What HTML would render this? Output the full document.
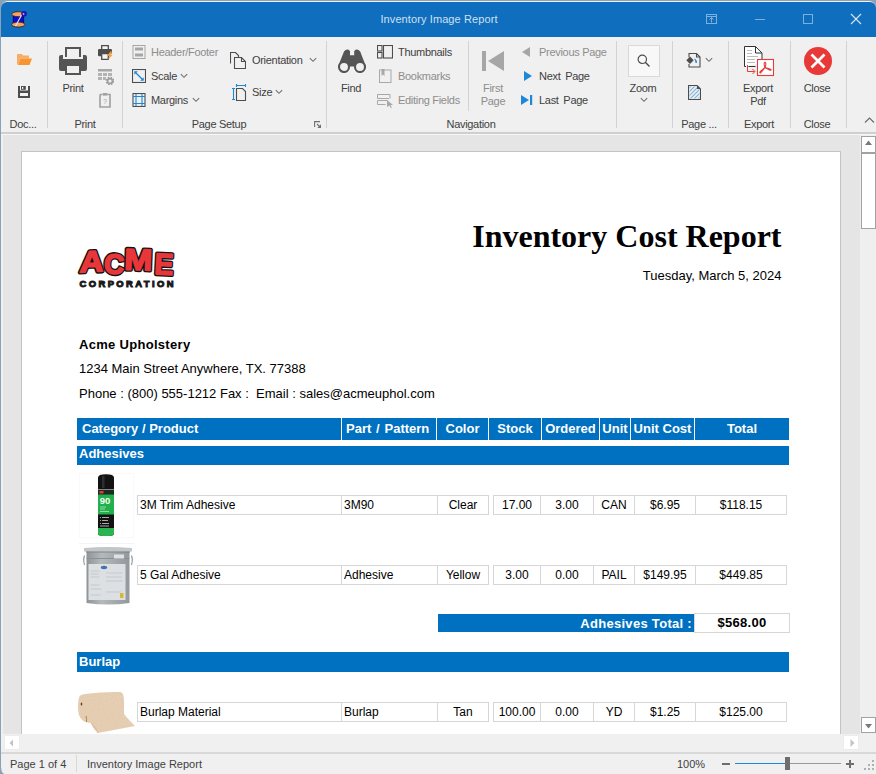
<!DOCTYPE html>
<html><head><meta charset="utf-8">
<style>
*{margin:0;padding:0;box-sizing:border-box}
html,body{width:876px;height:774px;overflow:hidden;background:#8aa2b7;font-family:"Liberation Sans",sans-serif}
.a{position:absolute}
#win{position:absolute;left:1px;top:1px;width:875px;height:773px;background:#f0f0f0;border-radius:7px 7px 0 6px;overflow:hidden}
#title{position:absolute;left:1px;top:2px;width:875px;height:35px;background:#106ebe;border-radius:6px 6px 0 0}
.ttl{position:absolute;left:0;width:878px;top:13px;text-align:center;color:#cfe0f0;font-size:11px;letter-spacing:0.1px}
.sep{position:absolute;width:1px;background:#d2d2d2}
.t{position:absolute;font-size:11px;letter-spacing:-0.3px;color:#404040;white-space:nowrap;line-height:14px}
.dis{color:#8f8f8f}
.gl{position:absolute;font-size:11px;letter-spacing:-0.3px;color:#404040;white-space:nowrap;line-height:14px;top:117px}
#prev{position:absolute;left:3px;top:135px;width:873px;height:599px;background:#e5e5e5}
#page{position:absolute;left:21px;top:151px;width:820px;height:600px;background:#fff;border:1px solid #c3c3c3}
.r{position:absolute;white-space:nowrap;color:#000}
.bar{position:absolute;background:#0070c0}
.cell{position:absolute;border:1px solid #d6d6d6;font-size:12px;line-height:19px;white-space:nowrap;overflow:hidden}
.hd{position:absolute;color:#fff;font-weight:bold;font-size:13px;line-height:22px;top:418px;height:22px;text-align:center}
.vl{position:absolute;width:1px;background:#fff;top:418px;height:22px}
</style></head><body>
<div id="win"></div>
<div id="title" class="a"></div>
<div class="ttl">Inventory Image Report</div>
<!-- ribbon separators -->
<div class="sep" style="left:47px;top:41px;height:87px"></div>
<div class="sep" style="left:122px;top:41px;height:87px"></div>
<div class="sep" style="left:326px;top:41px;height:87px"></div>
<div class="sep" style="left:468px;top:41px;height:70px"></div>
<div class="sep" style="left:616px;top:41px;height:87px"></div>
<div class="sep" style="left:672px;top:41px;height:87px"></div>
<div class="sep" style="left:728px;top:41px;height:87px"></div>
<div class="sep" style="left:790px;top:41px;height:87px"></div>
<div class="sep" style="left:846px;top:41px;height:87px"></div>
<div class="a" style="left:1px;top:132px;width:875px;height:2px;background:#cfcfcf"></div>
<!-- title bar icons -->
<svg class="a" style="left:11px;top:11px" width="16" height="17" viewBox="0 0 16 17">
  <rect x="2.2" y="3" width="10.5" height="10.5" fill="#0a0ad8" stroke="#000040" stroke-width="0.8"/>
  <ellipse cx="7.3" cy="3.2" rx="6.6" ry="2.5" fill="#f0a268" stroke="#3a1a08" stroke-width="0.8"/>
  <ellipse cx="7.3" cy="13.6" rx="6.6" ry="2.5" fill="#f0a268" stroke="#3a1a08" stroke-width="0.8"/>
  <path d="M12 1.5 L4.5 15" stroke="#e8e8f0" stroke-width="1.1"/>
  <circle cx="13" cy="2.8" r="2.1" fill="none" stroke="#0a0ad8" stroke-width="1.4"/>
</svg>
<svg class="a" style="left:705px;top:13px" width="13" height="12" viewBox="0 0 13 12"><g fill="none" stroke="#7fb0dc" stroke-width="1"><rect x="1.5" y="1.5" width="10" height="9"/><path d="M1.5 3.5h10M6.5 9.5v-5M4.5 6.5l2-2 2 2"/></g></svg>
<div class="a" style="left:755px;top:19px;width:10px;height:1px;background:#7fb0dc"></div>
<div class="a" style="left:803px;top:14px;width:10px;height:10px;border:1px solid #7fb0dc"></div>
<svg class="a" style="left:850px;top:13px" width="12" height="12" viewBox="0 0 12 12"><path d="M1 1L11 11M11 1L1 11" stroke="#d8e6f4" stroke-width="1.1"/></svg>

<!-- ribbon texts -->
<div class="t" style="left:151px;top:45px;color:#8d8d8d">Header/Footer</div>
<div class="t" style="left:151px;top:69px">Scale</div>
<div class="t" style="left:151px;top:93px">Margins</div>
<div class="t" style="left:252px;top:53px">Orientation</div>
<div class="t" style="left:252px;top:85px">Size</div>
<div class="t" style="left:398px;top:45px">Thumbnails</div>
<div class="t" style="left:398px;top:69px;color:#8d8d8d">Bookmarks</div>
<div class="t" style="left:398px;top:93px;color:#8d8d8d">Editing Fields</div>
<div class="t" style="left:539px;top:45px;color:#8d8d8d">Previous Page</div>
<div class="t" style="left:539px;top:69px;word-spacing:2px">Next Page</div>
<div class="t" style="left:539px;top:93px;word-spacing:2px">Last Page</div>
<!-- large labels (centered) -->
<div class="t" style="left:43px;width:60px;text-align:center;top:81px">Print</div>
<div class="t" style="left:321px;width:60px;text-align:center;top:81px">Find</div>
<div class="t" style="left:463px;width:60px;text-align:center;top:81px;color:#8d8d8d">First</div>
<div class="t" style="left:463px;width:60px;text-align:center;top:94px;color:#8d8d8d">Page</div>
<div class="t" style="left:613px;width:60px;text-align:center;top:81px">Zoom</div>
<div class="t" style="left:728px;width:60px;text-align:center;top:81px">Export</div>
<div class="t" style="left:728px;width:60px;text-align:center;top:94px">Pdf</div>
<div class="t" style="left:787px;width:60px;text-align:center;top:81px">Close</div>
<!-- group labels -->
<div class="gl" style="left:-7px;width:60px;text-align:center">Doc...</div>
<div class="gl" style="left:55px;width:60px;text-align:center">Print</div>
<div class="gl" style="left:169px;width:100px;text-align:center">Page Setup</div>
<div class="gl" style="left:421px;width:100px;text-align:center">Navigation</div>
<div class="gl" style="left:669px;width:60px;text-align:center">Page ...</div>
<div class="gl" style="left:729px;width:60px;text-align:center">Export</div>
<div class="gl" style="left:787px;width:60px;text-align:center">Close</div>

<!-- Doc group -->
<svg class="a" style="left:16px;top:53px" width="17" height="13" viewBox="0 0 17 13">
  <path d="M1 1h5l1 1.5h6v3H4.5L2 11.5H1z" fill="#f6ad68"/>
  <path d="M4.5 5.5H16L13.5 12H2z" fill="#f7952f"/>
</svg>
<svg class="a" style="left:18px;top:86px" width="12" height="12" viewBox="0 0 12 12">
  <rect x="0" y="0" width="12" height="12" fill="#4d4d4d"/>
  <rect x="2" y="0" width="8" height="4.5" fill="#f4f4f4"/>
  <rect x="3" y="0" width="4.8" height="3.8" fill="#4d4d4d"/>
  <rect x="4" y="0.9" width="1.3" height="2" fill="#f4f4f4"/>
  <rect x="2" y="7" width="8" height="3" fill="#f4f4f4"/>
</svg>
<!-- Print big -->
<svg class="a" style="left:59px;top:47px" width="28" height="28" viewBox="0 0 28 28">
  <path d="M6 0h16v10h-2V2H8v8H6z" fill="#555"/>
  <path d="M2 8h2v4h20V8h2a2 2 0 0 1 2 2v12a2 2 0 0 1-2 2h-4v-7H6v7H2a2 2 0 0 1-2-2V10a2 2 0 0 1 2-2z" fill="#555"/>
  <path d="M6 17h16v11H6z M8 19v7h12v-7z" fill="#555" fill-rule="evenodd"/>
</svg>
<!-- small printer w/ lightning -->
<svg class="a" style="left:98px;top:45px" width="16" height="16" viewBox="0 0 16 16">
  <path d="M3.7 4.5V0.7h6.6v3.8" fill="#f4f4f4" stroke="#4d4d4d" stroke-width="1.3"/>
  <path d="M1.2 4h11.6a1.2 1.2 0 0 1 1.2 1.2V8.5H3.2v2.8H1.2A1.2 1.2 0 0 1 0 10.1V5.2A1.2 1.2 0 0 1 1.2 4z" fill="#4d4d4d"/>
  <path d="M3.7 8.7h6.6v5.6H3.7z" fill="#f4f4f4" stroke="#4d4d4d" stroke-width="1.3"/>
  <path d="M12.3 6.5L9 11h2.6L9.6 15.2l5-5.4h-2.6L14.5 6.5z" fill="#f7952f"/>
</svg>
<!-- grid gear disabled -->
<svg class="a" style="left:98px;top:69px" width="16" height="16" viewBox="0 0 16 16">
  <rect x="0" y="0" width="14" height="2.5" fill="#a8a8a8"/>
  <rect x="0" y="4" width="4" height="3" fill="#b4b4b4"/><rect x="5" y="4" width="4" height="3" fill="#b4b4b4"/><rect x="10" y="4" width="4" height="3" fill="#b4b4b4"/>
  <rect x="0" y="8" width="4" height="3" fill="#b4b4b4"/><rect x="5" y="8" width="3" height="3" fill="#b4b4b4"/>
  <circle cx="12" cy="12" r="3.2" fill="none" stroke="#a0a0a0" stroke-width="2.2" stroke-dasharray="1.6 0.9"/>
  <circle cx="12" cy="12" r="2.4" fill="none" stroke="#a0a0a0" stroke-width="1.6"/>
</svg>
<!-- clipboard disabled -->
<svg class="a" style="left:99px;top:93px" width="13" height="15" viewBox="0 0 13 15">
  <path d="M1 1.5h2.5M8.5 1.5H11v12.5H1V1.5" fill="none" stroke="#a0a0a0" stroke-width="1.6"/>
  <rect x="3.8" y="0" width="4.6" height="2.6" fill="#a0a0a0"/>
  <text x="6" y="10.5" font-size="6.5" text-anchor="middle" fill="#9a9a9a" font-family="Liberation Sans">?</text>
</svg>
<!-- Header/Footer disabled -->
<svg class="a" style="left:132px;top:45px" width="14" height="14" viewBox="0 0 14 14">
  <rect x="1" y="0.5" width="12" height="13" fill="none" stroke="#a6a6a6" stroke-width="1"/>
  <rect x="3" y="2.5" width="8" height="3" fill="#a6a6a6"/><rect x="3" y="8.5" width="8" height="3" fill="#a6a6a6"/>
</svg>
<!-- Scale -->
<svg class="a" style="left:132px;top:69px" width="14" height="14" viewBox="0 0 14 14">
  <rect x="0.5" y="0.5" width="13" height="13" fill="none" stroke="#4d4d4d" stroke-width="1.1"/>
  <path d="M3 3l8 8" stroke="#1e88d8" stroke-width="1.2"/>
  <path d="M2.3 2.3h3.5l-3.5 3.5z M11.7 11.7h-3.5l3.5-3.5z" fill="#1e88d8"/>
</svg>
<svg class="a" style="left:180px;top:73px" width="8" height="6" viewBox="0 0 8 6"><path d="M0.8 1.2L4 4.3 7.2 1.2" fill="none" stroke="#707070" stroke-width="1.1"/></svg>
<!-- Margins -->
<svg class="a" style="left:132px;top:93px" width="14" height="14" viewBox="0 0 14 14">
  <rect x="1" y="0.5" width="12" height="13" fill="none" stroke="#4d4d4d" stroke-width="1.1"/>
  <path d="M4 1v12M10 1v12M1 3.5h12M1 10.5h12" stroke="#1e88d8" stroke-width="1.1"/>
</svg>
<svg class="a" style="left:192px;top:97px" width="8" height="6" viewBox="0 0 8 6"><path d="M0.8 1.2L4 4.3 7.2 1.2" fill="none" stroke="#707070" stroke-width="1.1"/></svg>
<!-- Orientation -->
<svg class="a" style="left:230px;top:52px" width="16" height="17" viewBox="0 0 16 17">
  <path d="M0.5 11.5V0.5h5l3 3v1.5" fill="none" stroke="#4d4d4d" stroke-width="1.1"/>
  <path d="M4.5 16.5V5.5h7l4 4v7z" fill="#f0f0f0" stroke="#4d4d4d" stroke-width="1.1"/>
  <path d="M11.5 5.5v4h4" fill="none" stroke="#4d4d4d" stroke-width="1.1"/>
</svg>
<svg class="a" style="left:309px;top:57px" width="8" height="6" viewBox="0 0 8 6"><path d="M0.8 1.2L4 4.3 7.2 1.2" fill="none" stroke="#707070" stroke-width="1.1"/></svg>
<!-- Size -->
<svg class="a" style="left:231px;top:84px" width="16" height="17" viewBox="0 0 16 17">
  <path d="M2.5 4v12M1 4.5h3M1 15.5h3" stroke="#1e88d8" stroke-width="1.1"/>
  <path d="M5 1.5h10M5.5 0v3M14.5 0v3" stroke="#1e88d8" stroke-width="1.1"/>
  <path d="M5.5 16.5V4.5h6l3 3v9z" fill="none" stroke="#4d4d4d" stroke-width="1.1"/>
</svg>
<svg class="a" style="left:275px;top:89px" width="8" height="6" viewBox="0 0 8 6"><path d="M0.8 1.2L4 4.3 7.2 1.2" fill="none" stroke="#707070" stroke-width="1.1"/></svg>
<!-- dialog launcher -->
<svg class="a" style="left:314px;top:121px" width="8" height="8" viewBox="0 0 8 8"><path d="M0.6 6V0.6H6" fill="none" stroke="#707070" stroke-width="1.1"/><path d="M3 3l3 3" stroke="#707070" stroke-width="1.1"/><path d="M7 3.3V7H3.3z" fill="#707070"/></svg>
<!-- Binoculars -->
<svg class="a" style="left:338px;top:49px" width="28" height="24" viewBox="0 0 28 24">
  <path d="M6 2.5 Q9 -1.2 12 2 V6.2 H16.2 V2 Q19.2 -1.2 22.2 2.5 L28 17.5 H0 Z" fill="#555"/>
  <circle cx="6" cy="18" r="5" fill="#f0f0f0" stroke="#555" stroke-width="2.1"/>
  <circle cx="22" cy="18" r="5" fill="#f0f0f0" stroke="#555" stroke-width="2.1"/>
</svg>
<!-- Thumbnails -->
<svg class="a" style="left:377px;top:45px" width="16" height="14" viewBox="0 0 16 14">
  <rect x="0.5" y="0.5" width="4.5" height="5.5" fill="none" stroke="#4d4d4d" stroke-width="1.1"/>
  <rect x="0.5" y="7.5" width="4.5" height="5.5" fill="none" stroke="#4d4d4d" stroke-width="1.1"/>
  <rect x="6.5" y="0.5" width="9" height="12.5" fill="none" stroke="#4d4d4d" stroke-width="1.1"/>
</svg>
<!-- Bookmarks disabled -->
<svg class="a" style="left:379px;top:69px" width="13" height="14" viewBox="0 0 13 14">
  <rect x="0.5" y="1" width="11.5" height="12.5" fill="none" stroke="#a8a8a8" stroke-width="1"/>
  <path d="M2.5 0h3v7l-1.5-1.5L2.5 7z" fill="#a8a8a8"/>
</svg>
<!-- Editing fields disabled -->
<svg class="a" style="left:377px;top:94px" width="17" height="14" viewBox="0 0 17 14">
  <path d="M13 4.5V0.5H0.5v4H12M0.5 6.5h10M0.5 6.5v4h8" fill="none" stroke="#a8a8a8" stroke-width="1"/>
  <path d="M10 6l6 5h-2.5l1.3 2.6-1 .5-1.3-2.6L10 13z" fill="#a8a8a8"/>
</svg>
<!-- First page disabled -->
<svg class="a" style="left:482px;top:51px" width="23" height="20" viewBox="0 0 23 20">
  <rect x="0" y="0" width="4" height="20" fill="#a6a6a6"/>
  <path d="M6 10L22 0v20z" fill="#a6a6a6"/>
</svg>
<svg class="a" style="left:521px;top:47px" width="10" height="11" viewBox="0 0 10 11"><path d="M1 5L9 0v10z" fill="#a6a6a6"/></svg>
<svg class="a" style="left:523px;top:71px" width="10" height="11" viewBox="0 0 10 11"><path d="M1 0l8 5-8 5z" fill="#1e88d8"/></svg>
<svg class="a" style="left:521px;top:95px" width="12" height="11" viewBox="0 0 12 11"><path d="M0 0l8 5-8 5z" fill="#1e88d8"/><rect x="9" y="0" width="2.2" height="10" fill="#1e88d8"/></svg>
<!-- Zoom -->
<div class="a" style="left:628px;top:45px;width:32px;height:32px;background:#f8f8f8;border:1px solid #d9d9d9"></div>
<svg class="a" style="left:637px;top:54px" width="14" height="14" viewBox="0 0 14 14">
  <circle cx="5.3" cy="5.3" r="4.2" fill="none" stroke="#4d4d4d" stroke-width="1.2"/>
  <path d="M8.3 8.3L12.5 12.5" stroke="#4d4d4d" stroke-width="1.5"/>
</svg>
<svg class="a" style="left:640px;top:97px" width="8" height="6" viewBox="0 0 8 6"><path d="M0.8 1.2L4 4.3 7.2 1.2" fill="none" stroke="#707070" stroke-width="1.1"/></svg>
<!-- Page color -->
<svg class="a" style="left:686px;top:53px" width="15" height="15" viewBox="0 0 15 15">
  <path d="M3 4V0.5h7.5l3.5 3.5v10H3v-3" fill="none" stroke="#4d4d4d" stroke-width="1.1"/>
  <path d="M10.5 0.5v3.5h3.5" fill="none" stroke="#4d4d4d" stroke-width="1.1"/>
  <path d="M4 3.5L7.7 7.3 4 11 0.3 7.3z" fill="#4d4d4d"/>
  <path d="M8 5.5c2 .5 3 2 3 3.5 0 1-1 1.3-1.5.8C9.2 9 9.5 7.5 8 5.5z" fill="#1e88d8"/>
</svg>
<svg class="a" style="left:705px;top:57px" width="8" height="6" viewBox="0 0 8 6"><path d="M0.8 1.2L4 4.3 7.2 1.2" fill="none" stroke="#707070" stroke-width="1.1"/></svg>
<!-- Watermark -->
<svg class="a" style="left:688px;top:85px" width="13" height="15" viewBox="0 0 13 15">
  <defs><clipPath id="wc"><rect x="1.5" y="1.5" width="10" height="12"/></clipPath></defs>
  <g clip-path="url(#wc)" stroke="#7db8e4" stroke-width="1.2"><path d="M-2 6L5 -1M-2 10L9 -1M-2 14L12 0M1 15L13 3M5 15L13 7M9 15L13 11"/></g>
  <path d="M0.5 14.5V0.5h8.5l3.5 3.5v10.5z" fill="none" stroke="#4d4d4d" stroke-width="1.1"/>
  <path d="M9 0.5v3.5h3.5z" fill="#4d4d4d"/>
</svg>
<!-- Export PDF -->
<svg class="a" style="left:743px;top:45px" width="32" height="32" viewBox="0 0 32 32">
  <path d="M1.5 21.5V1.5h11l6.5 6.5v10" fill="#fff" stroke="#333" stroke-width="1"/>
  <path d="M12.5 1.5v6.5h6.5" fill="none" stroke="#333" stroke-width="1"/>
  <path d="M1.5 21.5h1.5M5.5 21.5h7" stroke="#333" stroke-width="1"/>
  <path d="M4 5.5h5M4 8.5h5M4 11.5h11M4 14.5h8M4 17.5h8" stroke="#b4b4b4" stroke-width="0.9"/>
  <path d="M4.5 20v6.5h7" fill="none" stroke="#e83a3a" stroke-width="1"/>
  <path d="M9.5 24l2.5 2.5-2.5 2.5" fill="none" stroke="#e83a3a" stroke-width="1"/>
  <rect x="14.5" y="14.5" width="16" height="16" fill="#fff" stroke="#e83a3a" stroke-width="1.1"/>
  <g fill="none" stroke="#e83a3a" stroke-width="1.1" stroke-linecap="round">
    <path d="M22 22.5 C 21 20, 20.5 18, 22 17.3 C 23.5 18, 23 20, 22 22.5 Z"/>
    <path d="M22 22.5 L 18 27.5 C 17 28.5, 16.3 27.5, 17.3 26.5 L 22 22.5"/>
    <path d="M22 22.5 L 27 24 C 28.5 24.3, 28.5 25.5, 27 25.2 L 22 22.5"/>
  </g>
</svg>
<!-- Close -->
<svg class="a" style="left:804px;top:47px" width="28" height="28" viewBox="0 0 28 28">
  <circle cx="14" cy="14" r="14" fill="#e83838"/>
  <path d="M7.5 7.5l13 13M20.5 7.5l-13 13" stroke="#fff" stroke-width="2.7"/>
</svg>
<!-- collapse -->
<svg class="a" style="left:864px;top:116px" width="11" height="8" viewBox="0 0 11 8"><path d="M1 6.5L5.5 2 10 6.5" fill="none" stroke="#6a6a6a" stroke-width="1.1"/></svg>

<div class="a" style="left:2px;top:134px;width:874px;height:1px;background:#f7f7f7"></div>
<div id="prev"></div>
<div id="page"></div>
<!-- report content -->
<div class="a" style="left:22px;top:152px;width:818px;height:582px;overflow:hidden">
<div class="a" style="left:-22px;top:-152px;width:876px;height:900px">
<!-- logo -->
<svg class="a" style="left:74px;top:243px" width="106" height="48" viewBox="0 0 106 48">
  <defs>
    <g id="acme" font-family="Liberation Sans" font-weight="bold">
      <text transform="translate(5.2,29.5) rotate(-3) skewX(-6)" font-size="30" textLength="24" lengthAdjust="spacingAndGlyphs">A</text>
      <text transform="translate(29.5,30) rotate(4)" font-size="28" textLength="20" lengthAdjust="spacingAndGlyphs">C</text>
      <text transform="translate(50,26.5) rotate(2)" font-size="30" textLength="28" lengthAdjust="spacingAndGlyphs">M</text>
      <text transform="translate(80,31) rotate(3)" font-size="30" textLength="19" lengthAdjust="spacingAndGlyphs">E</text>
    </g>
  </defs>
  <use href="#acme" fill="#111" stroke="#111" stroke-width="4.2" stroke-linejoin="round"/>
  <use href="#acme" fill="#e8373a" stroke="#e8373a" stroke-width="1.6" stroke-linejoin="round"/>
  <text x="5.5" y="43.6" font-family="Liberation Sans" font-weight="bold" font-size="9.4" fill="#1a1a1a" stroke="#1a1a1a" stroke-width="1" textLength="94" lengthAdjust="spacing">CORPORATION</text>
</svg>
<div class="r" style="left:400px;width:381.5px;text-align:right;top:218px;font-family:'Liberation Serif',serif;font-weight:bold;font-size:32px;line-height:36px">Inventory Cost Report</div>
<div class="r" style="left:500px;width:281.5px;text-align:right;top:267.5px;font-size:13px;line-height:16px">Tuesday, March 5, 2024</div>
<div class="r" style="left:79px;top:336.5px;font-size:13px;line-height:16px;font-weight:bold;letter-spacing:0.3px">Acme Upholstery</div>
<div class="r" style="left:79px;top:360.5px;font-size:13px;line-height:16px">1234 Main Street Anywhere, TX. 77388</div>
<div class="r" style="left:79px;top:385.5px;font-size:13px;line-height:16px;white-space:pre">Phone : (800) 555-1212 Fax :  Email : sales@acmeuphol.com</div>

<!-- header -->
<div class="bar" style="left:77px;top:418px;width:712px;height:22px"></div>
<div class="vl" style="left:341px"></div><div class="vl" style="left:436px"></div><div class="vl" style="left:488px"></div><div class="vl" style="left:541px"></div><div class="vl" style="left:599px"></div><div class="vl" style="left:630px"></div><div class="vl" style="left:694px"></div>
<div class="hd" style="left:82px;text-align:left">Category / Product</div>
<div class="hd" style="left:346px;text-align:left;word-spacing:1.2px">Part / Pattern</div>
<div class="hd" style="left:437px;width:51px">Color</div>
<div class="hd" style="left:489px;width:52px">Stock</div>
<div class="hd" style="left:542px;width:57px">Ordered</div>
<div class="hd" style="left:600px;width:30px">Unit</div>
<div class="hd" style="left:631px;width:63px">Unit Cost</div>
<div class="hd" style="left:695px;width:94px">Total</div>

<!-- Adhesives group -->
<div class="bar" style="left:77px;top:446px;width:712px;height:19px"></div>
<div class="r" style="left:79px;top:445.5px;font-size:13px;line-height:16px;font-weight:bold;color:#fff">Adhesives</div>
<div class="cell" style="left:137px;top:495px;width:205px;height:20px;padding-left:2px;">3M Trim Adhesive</div>
<div class="cell" style="left:341px;top:495px;width:97px;height:20px;padding-left:2px;">3M90</div>
<div class="cell" style="left:437px;top:495px;width:52px;height:20px;text-align:center;">Clear</div>
<div class="cell" style="left:493px;top:495px;width:48px;height:20px;text-align:center;">17.00</div>
<div class="cell" style="left:540px;top:495px;width:54px;height:20px;text-align:center;">3.00</div>
<div class="cell" style="left:593px;top:495px;width:42px;height:20px;text-align:center;">CAN</div>
<div class="cell" style="left:634px;top:495px;width:62px;height:20px;text-align:center;">$6.95</div>
<div class="cell" style="left:695px;top:495px;width:92px;height:20px;text-align:center;">$118.15</div>
<div class="cell" style="left:137px;top:565px;width:205px;height:20px;padding-left:2px;">5 Gal Adhesive</div>
<div class="cell" style="left:341px;top:565px;width:97px;height:20px;padding-left:2px;">Adhesive</div>
<div class="cell" style="left:437px;top:565px;width:52px;height:20px;text-align:center;">Yellow</div>
<div class="cell" style="left:493px;top:565px;width:48px;height:20px;text-align:center;">3.00</div>
<div class="cell" style="left:540px;top:565px;width:54px;height:20px;text-align:center;">0.00</div>
<div class="cell" style="left:593px;top:565px;width:42px;height:20px;text-align:center;">PAIL</div>
<div class="cell" style="left:634px;top:565px;width:62px;height:20px;text-align:center;">$149.95</div>
<div class="cell" style="left:695px;top:565px;width:92px;height:20px;text-align:center;">$449.85</div>
<div class="cell" style="left:137px;top:702px;width:205px;height:20px;padding-left:2px;">Burlap Material</div>
<div class="cell" style="left:341px;top:702px;width:97px;height:20px;padding-left:2px;">Burlap</div>
<div class="cell" style="left:437px;top:702px;width:52px;height:20px;text-align:center;">Tan</div>
<div class="cell" style="left:493px;top:702px;width:48px;height:20px;text-align:center;">100.00</div>
<div class="cell" style="left:540px;top:702px;width:54px;height:20px;text-align:center;">0.00</div>
<div class="cell" style="left:593px;top:702px;width:42px;height:20px;text-align:center;">YD</div>
<div class="cell" style="left:634px;top:702px;width:62px;height:20px;text-align:center;">$1.25</div>
<div class="cell" style="left:695px;top:702px;width:92px;height:20px;text-align:center;">$125.00</div>
<!-- total -->
<div class="bar" style="left:438px;top:614px;width:256px;height:18px"></div>
<div class="r" style="left:500px;width:192px;text-align:right;top:615.5px;font-size:13px;line-height:16px;font-weight:bold;color:#fff;letter-spacing:0.3px">Adhesives Total :</div>
<div class="cell" style="left:694px;top:613px;width:96px;height:20px;text-align:center;font-weight:bold;font-size:13px;line-height:17px;letter-spacing:0.3px">$568.00</div>

<!-- Burlap group -->
<div class="bar" style="left:77px;top:652px;width:712px;height:20px"></div>
<div class="r" style="left:79px;top:653.5px;font-size:13px;line-height:16px;font-weight:bold;color:#fff">Burlap</div>

<!-- images -->
<div class="a" style="left:79px;top:473px;width:55px;height:65px;border:1px solid #f9f9f9"></div>
<svg class="a" style="left:97px;top:474px" width="18" height="62" viewBox="0 0 18 62">
  <path d="M1 3.5Q1 0.3 9 0.2Q17 0.3 17 3.5V60Q17 62 9 62Q1 62 1 60z" fill="#121212"/>
  <rect x="5" y="2" width="2.5" height="12" fill="#2e2e2e"/>
  <rect x="1" y="15" width="16" height="1.2" fill="#8a8a8a"/>
  <rect x="1" y="16.2" width="16" height="4.3" fill="#1c2a20"/>
  <rect x="2.5" y="17" width="4" height="2.5" fill="#e03a30"/>
  <rect x="1" y="20.5" width="16" height="20" fill="#22b04c"/>
  <text x="2.8" y="30" font-family="Liberation Sans" font-weight="bold" font-size="9.5" fill="#f2fff2">90</text>
  <path d="M3 33h6M3 35h5M3 37.5h9" stroke="#c0f0c8" stroke-width="0.7"/>
  <path d="M3 43.5h1M5 43.5h7M3 46.5h1M5 46.5h6M3 49.5h1M5 49.5h7M3 52h9" stroke="#d0d0d0" stroke-width="0.8"/>
  <path d="M1 54h16v6Q17 62 9 62Q1 62 1 60z" fill="#2ab552"/>
</svg>
<div class="a" style="left:79px;top:543px;width:55px;height:65px;border-top:1px solid #f4f4f4"></div>
<svg class="a" style="left:83px;top:546px" width="50" height="60" viewBox="0 0 50 60">
  <defs><linearGradient id="bk" x1="0" x2="1"><stop offset="0" stop-color="#8e9397"/><stop offset="0.35" stop-color="#b4b9bc"/><stop offset="1" stop-color="#93989c"/></linearGradient></defs>
  <path d="M3.5 5v52Q25 60 46.5 57V5z" fill="url(#bk)"/>
  <path d="M1 2Q25 0 49 2V5.5Q25 7 1 5.5z" fill="#c2c6c9"/>
  <path d="M3 6h44" stroke="#7e8488" stroke-width="1.2"/>
  <path d="M3.5 12.5h43" stroke="#8a9094" stroke-width="1"/>
  <rect x="31" y="8.5" width="10" height="4" fill="#dfe2e4"/>
  <rect x="5.5" y="18" width="37" height="36" fill="#dce0e3"/>
  <ellipse cx="21" cy="21.5" rx="3.2" ry="1.7" fill="#4a6fae"/>
  <path d="M7.5 25h9M7.5 28h8M7.5 31h9M23 27h17M23 31h16M23 35h17M7.5 39h9M7.5 43h11M23 46h15M7.5 49h10" stroke="#b8bec2" stroke-width="0.7"/>
  <rect x="37" y="47" width="3.5" height="5" fill="#d9b63c"/>
  <path d="M1.5 9.5Q0 14 1.5 19M48.5 9.5Q50 14 48.5 19" stroke="#8a9094" stroke-width="1.1" fill="none"/>
</svg>
<svg class="a" style="left:77px;top:690px" width="60" height="45" viewBox="0 0 60 45">
  <defs>
    <filter id="nz" x="0" y="0" width="100%" height="100%"><feTurbulence type="fractalNoise" baseFrequency="0.9" numOctaves="1" seed="3"/><feColorMatrix values="0 0 0 0 0.55  0 0 0 0 0.40  0 0 0 0 0.25  0 0 0 1.2 -0.45"/><feComposite in2="SourceGraphic" operator="in"/></filter>
    <path id="rl" d="M4 5 C 10 3, 30 2, 43 2 C 46 2, 47 6, 47 12 L 47 24 C 50 28, 54 32, 58 36 L 21 43 C 17 40, 15 36, 14 33 C 8 33, 1 30, 1 18 C 1 10, 2 6, 4 5z"/>
  </defs>
  <use href="#rl" fill="#e7cfb4"/>
  <use href="#rl" fill="#000" filter="url(#nz)" opacity="0.35"/>
  <path d="M14 33 C 18 37, 20 40, 21 43" stroke="#d2b392" stroke-width="0.8" fill="none"/>
  <ellipse cx="4.5" cy="14" rx="0.8" ry="1.6" fill="#6a3a18"/>
  <path d="M9 26 Q 10 30 9.5 32" stroke="#b8804a" stroke-width="1" fill="none"/>
</svg>
</div></div>

<!-- vertical scrollbar -->
<div class="a" style="left:860px;top:135px;width:16px;height:599px;background:#efefef"></div>
<div class="a" style="left:861px;top:136px;width:15px;height:17px;background:#fff;border:1px solid #a2a2a2"></div>
<svg class="a" style="left:865px;top:140px" width="7" height="5" viewBox="0 0 7 5"><path d="M0 5L3.5 0.5 7 5z" fill="#7a7a7a"/></svg>
<div class="a" style="left:861px;top:153px;width:15px;height:76px;background:#fff;border:1px solid #a2a2a2"></div>
<div class="a" style="left:861px;top:717px;width:15px;height:16px;background:#fff;border:1px solid #a2a2a2"></div>
<svg class="a" style="left:865px;top:724px" width="7" height="5" viewBox="0 0 7 5"><path d="M0 0L3.5 4.5 7 0z" fill="#7a7a7a"/></svg>
<!-- horizontal scrollbar -->
<div class="a" style="left:3px;top:734px;width:873px;height:18px;background:#f0f0f0"></div>
<div class="a" style="left:4px;top:735px;width:16px;height:15px;background:#fff;border:1px solid #ececec"></div>
<svg class="a" style="left:9px;top:739px" width="5" height="8" viewBox="0 0 5 8"><path d="M4 0.5L0.5 4 4 7.5z" fill="#c4c4c4"/></svg>
<div class="a" style="left:843px;top:735px;width:16px;height:15px;background:#fff;border:1px solid #ececec"></div>
<svg class="a" style="left:850px;top:739px" width="5" height="8" viewBox="0 0 5 8"><path d="M0.5 0L4.5 4 0.5 8z" fill="#c4c4c4"/></svg>
<!-- status bar -->
<div class="a" style="left:1px;top:752px;width:875px;height:2px;background:#d8d8d8"></div>
<div class="a" style="left:1px;top:754px;width:875px;height:20px;background:#f0f0f0"></div>
<div class="t" style="left:10px;top:757px;letter-spacing:0">Page 1 of 4</div>
<div class="a" style="left:76px;top:755px;width:1px;height:17px;background:#d8d8d8"></div>
<div class="t" style="left:87px;top:757px;letter-spacing:0">Inventory Image Report</div>
<div class="t" style="left:677px;top:757px;letter-spacing:0">100%</div>
<div class="a" style="left:722px;top:763px;width:8px;height:2px;background:#6e6e6e"></div>
<div class="a" style="left:735px;top:763px;width:50px;height:1px;background:#1e88d8"></div>
<div class="a" style="left:790px;top:763px;width:51px;height:1px;background:#9a9a9a"></div>
<div class="a" style="left:785px;top:757px;width:5px;height:13px;background:#6e6e6e"></div>
<div class="a" style="left:846px;top:763px;width:8px;height:2px;background:#6e6e6e"></div>
<div class="a" style="left:849px;top:760px;width:2px;height:8px;background:#6e6e6e"></div>
<svg class="a" style="left:863px;top:759px" width="12" height="12" viewBox="0 0 12 12"><g fill="#b0b0b0"><rect x="9" y="1" width="2" height="2"/><rect x="5" y="5" width="2" height="2"/><rect x="9" y="5" width="2" height="2"/><rect x="1" y="9" width="2" height="2"/><rect x="5" y="9" width="2" height="2"/><rect x="9" y="9" width="2" height="2"/></g></svg>

<svg class="a" style="left:0;top:768px" width="6" height="6" viewBox="0 0 6 6"><path d="M0 0H1.2Q1.2 5.2 4.5 6H0Z" fill="#8aa2b7"/></svg>
</body></html>
